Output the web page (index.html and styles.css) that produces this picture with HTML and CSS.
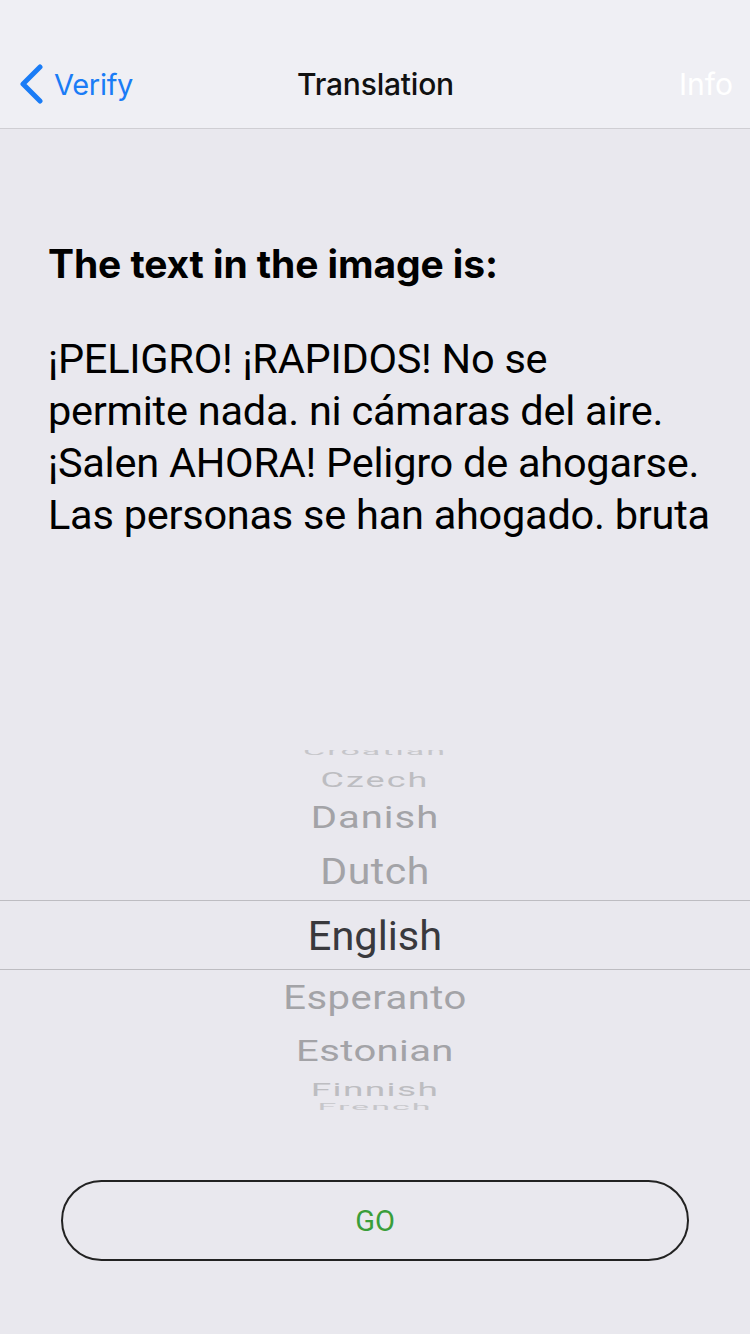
FILE: index.html
```html
<!DOCTYPE html>
<html>
<head>
<meta charset="utf-8">
<link rel="stylesheet" href="styles.css">
</head>
<body>
<div class="screen">
  <header class="nav">
    <div class="nav-left">
      <svg class="chev" width="26" height="40" viewBox="0 0 26 40"><path d="M22 3 L5 20 L22 37" fill="none" stroke="#1a7cf6" stroke-width="5" stroke-linecap="round" stroke-linejoin="round"/></svg>
      <span class="back">Verify</span>
    </div>
    <div class="nav-title">Translation</div>
    <div class="nav-right">Info</div>
  </header>
  <main class="content">
    <h1 class="heading">The text in the image is:</h1>
    <p class="body-text">¡PELIGRO! ¡RAPIDOS! No se<br>permite nada. ni cámaras del aire.<br>¡Salen AHORA! Peligro de ahogarse.<br>Las personas se han ahogado. bruta</p>
  </main>
  <section class="picker">
    <div class="sel-band"></div>
    <div class="items">
      <div class="item r-4">Croatian</div>
      <div class="item r-3">Czech</div>
      <div class="item r-2">Danish</div>
      <div class="item r-1">Dutch</div>
      <div class="item r0">English</div>
      <div class="item r1">Esperanto</div>
      <div class="item r2">Estonian</div>
      <div class="item r3">Finnish</div>
      <div class="item r4">French</div>
    </div>
  </section>
  <div class="go-wrap">
    <button class="go">GO</button>
  </div>
</div>
</body>
</html>
```
FILE: styles.css
```css
html, body {
  margin: 0;
  padding: 0;
}
body {
  background: #e9e8ee;
  font-family: Roboto, Inter, "Noto Sans", sans-serif;
}
.screen {
  width: 750px;
  height: 1334px;
  display: flex;
  flex-direction: column;
  overflow: hidden;
}
.nav {
  height: 88px;
  flex: none;
  padding-top: 40px;
  background: #efeff4;
  border-bottom: 1px solid #cfced3;
  display: flex;
  align-items: center;
  font-family: Inter, Roboto, sans-serif;
}
.nav-left {
  display: flex;
  align-items: center;
  padding-left: 18px;
  gap: 10px;
  flex: 1;
}
.back {
  color: #1a7cf6;
  font-size: 29px;
  letter-spacing: -0.3px;
}
.nav-title {
  font-size: 30px;
  color: #111;
  font-weight: 500;
  letter-spacing: -0.2px;
}
.nav-right {
  flex: 1;
  text-align: right;
  padding-right: 17px;
  color: #ffffff;
  font-size: 30px;
}
.content {
  flex: none;
  height: 621px;
  padding: 110px 30px 0 48px;
  box-sizing: border-box;
}
.heading {
  margin: 0;
  font-family: Inter, Roboto, sans-serif;
  font-size: 39px;
  font-weight: 700;
  line-height: 50px;
  color: #000;
  letter-spacing: -0.1px;
}
.body-text {
  margin: 44px 0 0 0;
  font-size: 41.5px;
  line-height: 52px;
  color: #000;
  white-space: nowrap;
  letter-spacing: -0.25px;
}
.picker {
  flex: none;
  position: relative;
  height: 362px;
  overflow: hidden;
}
.sel-band {
  position: absolute;
  left: 0;
  right: 0;
  top: 150px;
  height: 68px;
  border-top: 1px solid #bdbcc1;
  border-bottom: 1px solid #bdbcc1;
}
.items {
  display: flex;
  flex-direction: column;
  align-items: center;
}
.item {
  font-size: 40px;
  color: #a3a3a7;
  text-align: center;
  white-space: nowrap;
}
.r-4 { height: 14px; line-height: 14px; margin-top: -6px; margin-bottom: 6px; transform: scaleY(0.3); color: #c6c6ca; letter-spacing: 2px; font-size: 34px; }
.r-3 { height: 32px; line-height: 32px; transform: scaleY(0.55); color: #bdbdc1; letter-spacing: 2px; font-size: 36px; }
.r-2 { height: 44px; line-height: 44px; transform: scaleY(0.78); letter-spacing: 1px; }
.r-1 { height: 62px; line-height: 62px; transform: scaleY(0.9); font-size: 41px; letter-spacing: 0.5px; }
.r0 { height: 68px; line-height: 68px; font-size: 41.5px; color: #39393d; }
.r1 { height: 56px; line-height: 56px; transform: scaleY(0.82); letter-spacing: 0.5px; }
.r2 { height: 52px; line-height: 52px; transform: scaleY(0.72); letter-spacing: 0.4px; }
.r3 { height: 24px; line-height: 24px; transform: scaleY(0.5); color: #bdbdc1; letter-spacing: 1.4px; font-size: 37px; }
.r4 { height: 10px; line-height: 10px; transform: scaleY(0.25); color: #c6c6ca; letter-spacing: 2px; font-size: 34px; }
.go-wrap {
  padding: 68px 61px 0 61px;
}
.go {
  width: 628px;
  height: 81px;
  border: 2px solid #222;
  border-radius: 41px;
  background: transparent;
  color: #3a9e3a;
  font-family: Roboto, Inter, sans-serif;
  font-size: 29px;
  display: block;
  padding: 0;
}
```
